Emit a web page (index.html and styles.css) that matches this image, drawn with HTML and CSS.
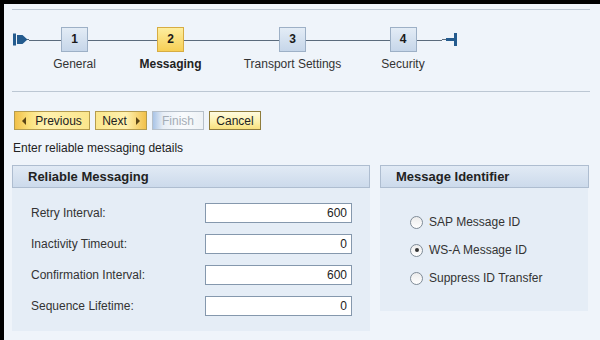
FILE: index.html
```html
<!doctype html>
<html>

<head lang="en">
  <meta charset="utf-8">
  <title>Messaging Configuration Wizard</title>
  <link rel="stylesheet" href="styles.css">
</head>

<body>
  <div class="screen">
    <div class="rule"></div>

    <div class="roadmap">
      <svg class="rm-start" width="16" height="13" viewBox="0 0 16 13">
        <rect x="0" y="0.5" width="3" height="12" fill="#245b8e" />
        <path d="M4 2 H9.5 L14.5 6.5 L9.5 11 H4 Z" fill="#245b8e" />
        <rect x="14" y="6" width="2" height="1" fill="#5b6b7c" />
      </svg>
      <div class="step step-1">
        <div class="track"><span class="link"></span><span class="box">1</span><span class="link"></span></div>
        <div class="label">General</div>
      </div>
      <div class="step step-2 current">
        <div class="track"><span class="link"></span><span class="box">2</span><span class="link"></span></div>
        <div class="label">Messaging</div>
      </div>
      <div class="step step-3">
        <div class="track"><span class="link"></span><span class="box">3</span><span class="link"></span></div>
        <div class="label">Transport Settings</div>
      </div>
      <div class="step step-4">
        <div class="track"><span class="link"></span><span class="box">4</span><span class="link"></span></div>
        <div class="label">Security</div>
      </div>
      <svg class="rm-end" width="17" height="13" viewBox="0 0 17 13">
        <rect x="0" y="6" width="5" height="1" fill="#5b6b7c" />
        <rect x="4" y="5" width="9" height="3" fill="#245b8e" />
        <rect x="12" y="0" width="3" height="13" fill="#245b8e" />
      </svg>
    </div>

    <div class="rule rule-2"></div>

    <div class="toolbar">
      <button class="btn btn-prev"><span class="tri tri-left"></span>Previous</button>
      <button class="btn btn-next">Next<span class="tri tri-right"></span></button>
      <button class="btn btn-finish" disabled>Finish</button>
      <button class="btn btn-cancel">Cancel</button>
    </div>

    <p class="hint">Enter reliable messaging details</p>

    <div class="panels">
      <section class="panel panel-main">
        <h2 class="panel-head">Reliable Messaging</h2>
        <div class="panel-body form">
          <div class="row">
            <label class="field-label">Retry Interval:</label>
            <input class="field" type="text" value="600" />
          </div>
          <div class="row">
            <label class="field-label">Inactivity Timeout:</label>
            <input class="field" type="text" value="0" />
          </div>
          <div class="row">
            <label class="field-label">Confirmation Interval:</label>
            <input class="field" type="text" value="600" />
          </div>
          <div class="row">
            <label class="field-label">Sequence Lifetime:</label>
            <input class="field" type="text" value="0" />
          </div>
        </div>
      </section>

      <section class="panel panel-side">
        <h2 class="panel-head">Message Identifier</h2>
        <div class="panel-body options">
          <div class="option"><span class="radio"></span>SAP Message ID</div>
          <div class="option"><span class="radio checked"></span>WS-A Message ID</div>
          <div class="option"><span class="radio"></span>Suppress ID Transfer</div>
        </div>
      </section>
    </div>
  </div>
</body>

</html>
```

FILE: styles.css
```css
body {
  margin: 0;
  font-family: "Liberation Sans", Arial, sans-serif;
  font-size: 12px;
  color: #222;
}

.screen {
  box-sizing: border-box;
  width: 600px;
  height: 340px;
  overflow: hidden;
  border-top: 4px solid #000;
  border-left: 4px solid #000;
  padding: 5px 11px 0 8px;
  background: #eff4fa;
}

.rule {
  height: 1px;
  background: #bcc7d3;
  margin-right: -1px;
}

.rule-2 {
  margin-top: 20px;
}

/* roadmap */
.roadmap {
  display: flex;
  align-items: flex-start;
  margin-top: 17px;
}

.rm-start {
  margin-left: 1px;
  margin-top: 6px;
}

.rm-end {
  margin-top: 6px;
}

.step {
  display: flex;
  flex-direction: column;
  align-items: center;
}

.step-1 { width: 91px; }
.step-2 { width: 101px; }
.step-3 { width: 143px; }
.step-4 { width: 78px; }

.track {
  display: flex;
  align-items: center;
  width: 100%;
  height: 25px;
}

.link {
  flex: 1;
  height: 1px;
  margin-top: 1px;
  background: #5b6b7c;
}

.box {
  box-sizing: border-box;
  width: 27px;
  height: 25px;
  border: 1px solid #9db0c6;
  background: linear-gradient(#e3ecf6, #c6d6e9);
  font-weight: bold;
  font-size: 12px;
  line-height: 23px;
  text-align: center;
  color: #1a1a1a;
}

.current .box {
  border-color: #d7ac42;
  background: linear-gradient(#fdeea0, #f7cf55);
}

.label {
  margin-top: 5px;
  line-height: 14px;
  white-space: nowrap;
  color: #333;
}

.current .label {
  font-weight: bold;
  color: #222;
}

/* buttons */
.toolbar {
  display: flex;
  gap: 5px;
  margin-top: 19px;
  margin-left: 2px;
}

.btn {
  box-sizing: border-box;
  display: flex;
  align-items: center;
  justify-content: center;
  gap: 6px;
  height: 19px;
  width: 52px;
  padding: 0;
  border: 1px solid #b59c4e;
  background: linear-gradient(#fff7cc, #fbe68c 50%, #f4d45f);
  font-family: inherit;
  font-size: 12px;
  color: #222;
}

.btn-prev {
  width: 76px;
  gap: 9px;
  background: linear-gradient(90deg, #f1c04a, #fbe17c 14px, #fff2b0 40%, #fbe68c);
}

.btn-next {
  gap: 9px;
  background: linear-gradient(90deg, #fbe68c, #fff2b0 60%, #f1c04a);
}

.btn-finish {
  border-color: #b7c0ca;
  background: linear-gradient(90deg, #a9c4e6, #e8eef6 10px, #f9fbfd 60%, #eef2f6);
  color: #a5adb6;
}

.btn-cancel {
  border-color: #8f7c3c;
  background: linear-gradient(#fffbe0, #fdf0a8 60%, #f8e07e);
}

.tri {
  width: 0;
  height: 0;
  border-top: 4px solid transparent;
  border-bottom: 4px solid transparent;
}

.tri-left {
  border-right: 4px solid #5b4515;
}

.tri-right {
  border-left: 4px solid #5b4515;
}

.hint {
  margin: 11px 0 0 1px;
  line-height: 14px;
  color: #222;
}

/* panels */
.panels {
  display: flex;
  align-items: flex-start;
  gap: 10px;
  margin-top: 10px;
}

.panel-main {
  width: 358px;
}

.panel-side {
  width: 209px;
}

.panel-head {
  box-sizing: border-box;
  height: 23px;
  margin: 0;
  padding-left: 15px;
  border: 1px solid #aebdd0;
  background: linear-gradient(#e1eaf5, #ccdaeb);
  font-size: 13px;
  font-weight: bold;
  line-height: 21px;
  color: #222;
}

.panel-body {
  box-sizing: border-box;
  background: #e5edf6;
}

.form {
  height: 143px;
  padding: 15px 18px 0 19px;
  display: flex;
  flex-direction: column;
  gap: 11px;
}

.row {
  display: flex;
  align-items: center;
  height: 20px;
}

.field-label {
  width: 174px;
  color: #333;
}

.field {
  box-sizing: border-box;
  width: 147px;
  height: 20px;
  padding: 0 4px;
  border: 1px solid #8598ad;
  background: #fff;
  font-family: inherit;
  font-size: 12px;
  text-align: right;
  color: #222;
}

.options {
  height: 123px;
  margin-right: 1px;
  padding: 20px 0 0 30px;
}

.option {
  display: flex;
  align-items: center;
  gap: 6px;
  height: 28px;
  color: #333;
}

.radio {
  box-sizing: border-box;
  position: relative;
  width: 13px;
  height: 13px;
  border: 1px solid #7f8b97;
  border-radius: 50%;
  background: linear-gradient(#ececec, #fff);
}

.radio.checked::after {
  content: "";
  position: absolute;
  left: 3.5px;
  top: 3.5px;
  width: 4px;
  height: 4px;
  border-radius: 50%;
  background: #333;
}
```
